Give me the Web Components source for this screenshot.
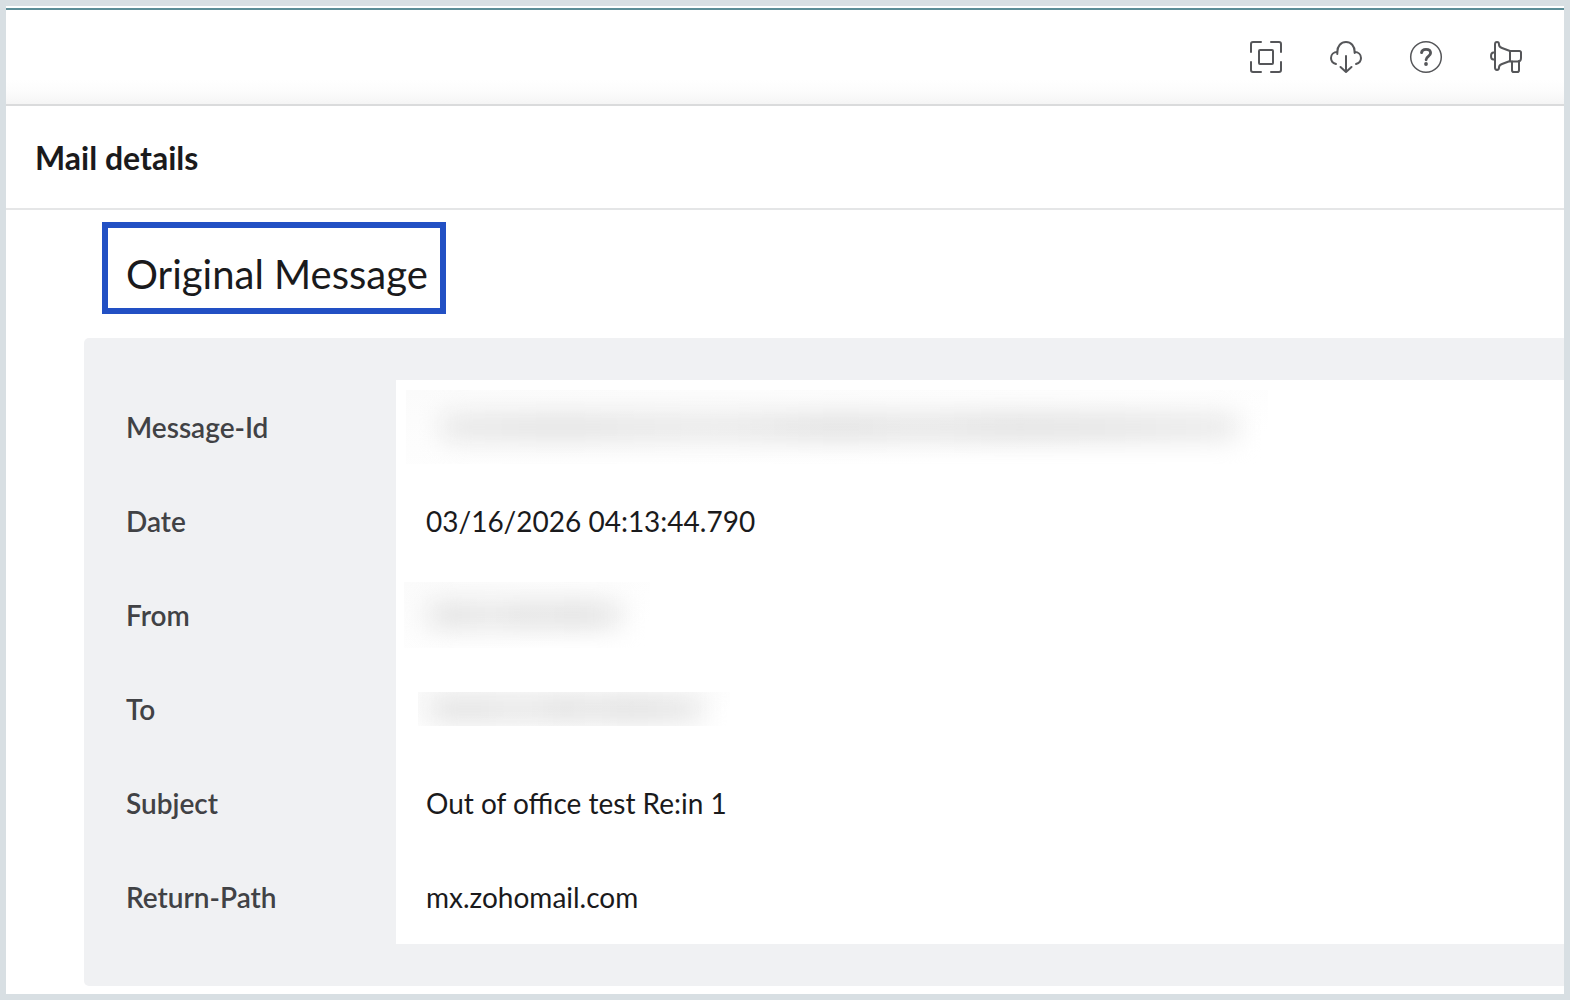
<!DOCTYPE html>
<html lang="en">
<head>
<meta charset="utf-8">
<title>Mail details</title>
<style>
  html, body { height: 100%; margin: 0; }
  body {
    font-family: Lato, "Open Sans", sans-serif;
    color: #1a1a1c;
    background: #d8dfe3;
  }
</style>
</head>
<body>
<app-frame>
  <tool-bar slot="toolbar"></tool-bar>
  <page-title slot="title">Mail details</page-title>
  <section-title>Original Message</section-title>
  <mail-headers></mail-headers>
</app-frame>

<script>
customElements.define('app-frame', class extends HTMLElement {
  connectedCallback() {
    this.attachShadow({mode: 'open'});
    this.shadowRoot.innerHTML = `
      <slot name="toolbar"></slot>
      <slot name="title"></slot>
      <main><slot></slot></main>

      <style>
        :host {
          display: flex;
          flex-direction: column;
          box-sizing: border-box;
          min-height: 100%;
          padding-top: 2px;
          border: 6px solid #d8dfe3;
          background: white;
          overflow: hidden;
        }

        main {
          flex-grow: 1;
          padding: 12px 0 8px 78px;
        }
      </style>
    `;
  }
});

customElements.define('tool-bar', class extends HTMLElement {
  connectedCallback() {
    this.attachShadow({mode: 'open'});
    this.shadowRoot.innerHTML = `
      <button type="button" aria-label="Full screen">
        <svg viewBox="0 0 32 32">
          <path d="M1 11V3a2 2 0 0 1 2-2h8M21 1h8a2 2 0 0 1 2 2v8M31 21v8a2 2 0 0 1-2 2h-8M11 31H3a2 2 0 0 1-2-2v-8"/>
          <rect x="9" y="9" width="14" height="14" rx="1"/>
        </svg>
      </button>
      <button type="button" aria-label="Download">
        <svg viewBox="0 0 32 32">
          <path d="M6 23C2.500 22 1 19.500 1 17c0-3.500 2.700-6 6.300-6C7.300 5 11 1 16 1s8.700 4 8.700 10c3.600 0 6.300 2.500 6.300 6 0 2.500-1.500 5-5 6"/>
          <path d="M7.300 11v2M24.700 11v1M16 15v15.500M10.500 26l5.500 5 5.500-5"/>
        </svg>
      </button>
      <button type="button" aria-label="Help">
        <svg viewBox="0 0 32 32">
          <circle cx="16" cy="16" r="15.300" stroke-width="1.500"/>
          <path stroke-width="2.800" d="M11.500 11.700C11.800 9.500 13.500 8.300 16 8.300c2.700 0 4.600 1.400 4.600 3.800 0 3.400-4.500 3.300-4.500 6.700"/>
          <circle class="dot" cx="16" cy="23" r="1.900"/>
        </svg>
      </button>
      <button type="button" aria-label="Announcements">
        <svg viewBox="0 0 32 32">
          <path d="M5 3.500C5 .2 9 .2 9 3.500c0 2 1 2.800 3 3.500l8 3v10l-8 3c-2 .7-3 1.500-3 3.500 0 3.300-4 3.300-4 0z"/>
          <path d="M5 11.500H3.500c-3.300 0-3.300 7 0 7H5M20 10h9.500a1.500 1.500 0 0 1 1.500 1.500V17c0 2-1.500 3.500-3.500 3.500H20z"/>
          <path d="M22 20.500v8.700c0 1.200.8 1.800 1.800 1.800h3.400c1 0 1.800-.6 1.800-1.800V20"/>
        </svg>
      </button>

      <style>
        :host {
          display: flex;
          align-items: center;
          justify-content: flex-end;
          gap: 48px;
          height: 94px;
          padding-right: 42px;
          border-top: 2px solid #5c8d97;
          border-bottom: 2px solid #dadbdc;
          background: linear-gradient(to top, #f5f5f5, #fcfcfc 12px, white 24px);
        }

        button {
          display: block;
          width: 32px;
          height: 32px;
          padding: 0;
          border: 0;
          background: none;
          cursor: pointer;
        }

        svg {
          display: block;
          width: 100%;
          height: 100%;
          overflow: visible;
          fill: none;
          stroke: #555659;
          stroke-width: 2;
          stroke-linecap: round;
          stroke-linejoin: round;
        }

        .dot {
          fill: #555659;
          stroke: none;
        }
      </style>
    `;
  }
});

customElements.define('page-title', class extends HTMLElement {
  connectedCallback() {
    this.attachShadow({mode: 'open'});
    this.shadowRoot.innerHTML = `
      <h1><slot></slot></h1>

      <style>
        :host {
          display: block;
          padding: 32px 29px 30px;
          border-bottom: 2px solid #e5e6e7;
        }

        h1 {
          margin: 0;
          font-size: 32px;
          font-weight: 700;
          line-height: 40px;
        }
      </style>
    `;
  }
});

customElements.define('section-title', class extends HTMLElement {
  connectedCallback() {
    this.attachShadow({mode: 'open'});
    this.shadowRoot.innerHTML = `
      <h2><slot></slot></h2>

      <style>
        :host {
          display: block;
          width: fit-content;
          margin: 0 0 24px 18px;
          padding: 20px 12px 8px 18px;
          border: 6px solid #2250c4;
        }

        h2 {
          margin: 0;
          font-size: 40px;
          font-weight: 400;
          line-height: 52px;
          white-space: nowrap;
        }
      </style>
    `;
  }
});

// a soft grey smear in place of a private value
customElements.define('hidden-value', class extends HTMLElement {
  connectedCallback() {
    this.attachShadow({mode: 'open'});
    this.shadowRoot.innerHTML = `
      <div class="smear"></div>

      <style>
        :host {
          display: flex;
          align-items: center;
          box-sizing: border-box;
          max-width: 100%;
          background: linear-gradient(to bottom right, #fbfbfb, white 80%);
          overflow: hidden;
        }

        .smear {
          flex-grow: 1;
          height: 24px;
          background: linear-gradient(to right,
            #e6e6e6, #dfdfdf 15%, #e4e4e4 25%, #e7e7e7 35%, #dddddd 50%,
            #e3e3e3 60%, #dcdcdc 72%, #e0e0e0 85%, #e8e8e8);
          filter: blur(13px);
        }
      </style>
    `;
  }
});

customElements.define('mail-headers', class extends HTMLElement {
  connectedCallback() {
    this.attachShadow({mode: 'open'});
    this.shadowRoot.innerHTML = `
      <table>
        <tr><th scope="row">Message-Id</th><td><hidden-value class="id"></hidden-value></td></tr>
        <tr><th scope="row">Date</th><td>03/16/2026 04:13:44.790</td></tr>
        <tr><th scope="row">From</th><td><hidden-value class="from"></hidden-value></td></tr>
        <tr><th scope="row">To</th><td><hidden-value class="to"></hidden-value></td></tr>
        <tr><th scope="row">Subject</th><td>Out of office test Re:in 1</td></tr>
        <tr><th scope="row">Return-Path</th><td>mx.zohomail.com</td></tr>
      </table>

      <style>
        :host {
          display: block;
          padding: 42px 0 42px 42px;
          border-radius: 5px 0 0 5px;
          background: #f0f1f3;
        }

        table {
          width: 100%;
          border-collapse: collapse;
          font-size: 28px;
          line-height: 34px;
        }

        th, td {
          height: 94px;
          box-sizing: border-box;
          padding: 0;
          text-align: left;
          vertical-align: middle;
        }

        th {
          width: 270px;
          font-weight: 600;
          color: #414245;
        }

        td {
          padding-left: 30px;
          background: white;
        }

        .id {
          width: 862px;
          height: 74px;
          margin-left: -20px;
          padding: 0 30px 0 36px;
        }

        .from {
          width: 246px;
          height: 66px;
          margin-left: -22px;
          padding: 0 28px 0 24px;
        }

        .to {
          width: 312px;
          height: 34px;
          margin-left: -8px;
          padding: 0 26px 0 10px;
        }
      </style>
    `;
  }
});
</script>
</body>
</html>
